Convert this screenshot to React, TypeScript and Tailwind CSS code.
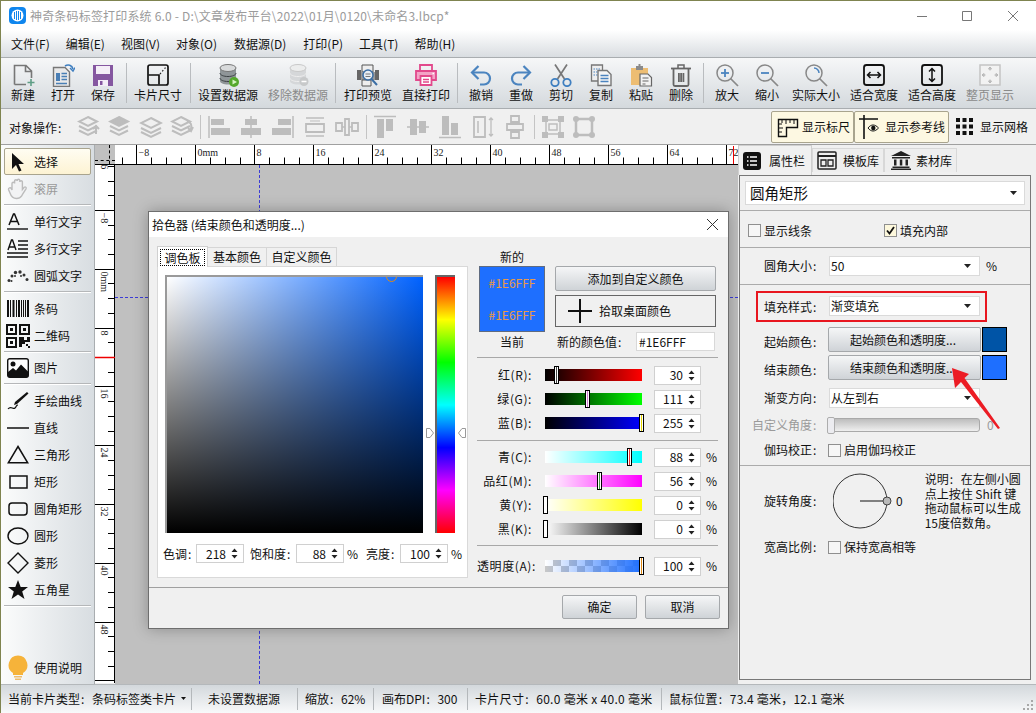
import React from "react";

type P = { s?: number };
const I = ({ s = 24, children, vb = "0 0 24 24" }: { s?: number; children: React.ReactNode; vb?: string }) => (
  <svg width={s} height={s} viewBox={vb} fill="none" className="block shrink-0">{children}</svg>
);
const C = () => <span className="inline-block w-[12px] pl-[1px] text-left">:</span>;

const NewI = () => (
  <I><path d="M3.5 21.5V2.5H15L20.5 8V15M3.5 21.5H15M14.5 2.5V8.5H20.5" stroke="#777" strokeWidth="1.6" /><path d="M20 16v7M16.5 19.5h7" stroke="#5f9e86" strokeWidth="1.6" /></I>
);
const OpenI = () => (
  <I><path d="M2.5 4.5H14L18.5 9V23.5H2.5Z" fill="#e9e9e9" stroke="#777" strokeWidth="1.4" /><path d="M5 10h4v8H5z" fill="#4a7fb5" /><path d="M10.5 10.5H16M10.5 13.5H16M10.5 16.5H16M5 20.5H16" stroke="#4a7fb5" strokeWidth="1.3" /><path d="M14 3c3-2 7-1 8 3" stroke="#3f7fc0" strokeWidth="1.6" /><path d="M19 5l3 3 2-3.500" stroke="#3f7fc0" strokeWidth="1.4" /></I>
);
const SaveI = () => (
  <I><path d="M2 2h20v21H2Z" fill="#8557a0" /><path d="M5 3h14v8H5z" fill="#f4eef7" /><path d="M7 17h10v6H7z" fill="#f4eef7" /><path d="M9 18h2.500v4H9z" fill="#8557a0" /></I>
);
const CardI = () => (
  <I><rect x="2" y="2" width="20" height="20" rx="2" stroke="#111" strokeWidth="1.7" /><path d="M2.500 12H13V21.500" stroke="#111" strokeWidth="1.7" /><path d="M14 11l6-7" stroke="#222" strokeWidth="1.200" strokeDasharray="1.500 2" /></I>
);
const Db = ({ on }: { on: boolean }) => (
  <I>
    <path d="M4 5v13c0 2 3.500 3.500 8 3.500s8-1.500 8-3.500V5" fill={on ? "#8f9598" : "#d5d7d9"} />
    <ellipse cx="12" cy="5" rx="8" ry="3.500" fill={on ? "#d8dadb" : "#eceded"} stroke={on ? "#777" : "#c9c9c9"} />
    <path d="M4 10c0 2 3.500 3.500 8 3.500s8-1.500 8-3.500M4 15c0 2 3.500 3.500 8 3.500s8-1.500 8-3.500" stroke={on ? "#3c4144" : "#eee"} strokeWidth="1" />
    {on ? (
      <g><circle cx="18" cy="19" r="5" fill="#55a82c" /><path d="M16.500 16.500L21 19l-4.500 2.500Z" fill="#d8f4c4" /></g>
    ) : (
      <g><circle cx="18" cy="18.500" r="4.500" fill="#c7c9ca" /><path d="M15.500 18.500h5" stroke="#fff" strokeWidth="1.500" /></g>
    )}
  </I>
);
const PreviewI = () => (
  <I>
    <path d="M6 2h11v7H6z" fill="#eee" stroke="#555" />
    <path d="M1 7h4v10H1zM19 7h4v10h-4z" fill="#666" />
    <path d="M5 9h14v8H5z" fill="#999" />
    <path d="M6 17h9v6H6z" fill="#eee" stroke="#555" />
    <circle cx="12" cy="12" r="5" fill="#e7eef5" stroke="#3a6ea5" strokeWidth="1.500" />
    <path d="M9.500 11h5M9.500 13.500h5" stroke="#777" />
    <path d="M15.500 16l5.500 6" stroke="#3a6ea5" strokeWidth="2" />
  </I>
);
const PrintI = () => (
  <I>
    <path d="M6 8V2h12v6" stroke="#e2498c" strokeWidth="1.800" />
    <path d="M6 17H2V8h20v9h-4" fill="#f3a3c6" stroke="#e2498c" strokeWidth="1.800" />
    <path d="M6.500 13h11v9h-11z" fill="#fff" stroke="#e2498c" strokeWidth="1.800" />
    <path d="M9 16.500h6M9 19h6" stroke="#e2498c" strokeWidth="1.300" />
    <path d="M18.500 10.500h1.500" stroke="#fff" strokeWidth="1.500" />
  </I>
);
const UndoI = ({ flip }: { flip?: boolean }) => (
  <I><g transform={flip ? "matrix(-1 0 0 1 24 0)" : undefined}><path d="M3 9.500h12a6 6 0 0 1 6 6 6 6 0 0 1-6 6h-4" stroke="#4b84bf" strokeWidth="2.200" /><path d="M9.500 3L3 9.500 9.500 16" stroke="#4b84bf" strokeWidth="2.200" /></g></I>
);
const CutI = () => (
  <I><path d="M6 1.500L15.500 16M18 1.500L8.500 16" stroke="#777" strokeWidth="1.700" /><circle cx="6" cy="19.500" r="3.700" stroke="#3f7fc0" strokeWidth="1.800" /><circle cx="18" cy="19.500" r="3.700" stroke="#3f7fc0" strokeWidth="1.800" /></I>
);
const CopyI = () => (
  <I><path d="M2.500 2h11v16h-11z" fill="#eee" stroke="#777" strokeWidth="1.300" /><path d="M4.500 6h7M4.500 9h7M4.500 12h7" stroke="#4b84bf" strokeDasharray="1.500 1" /><path d="M9 7.500h9l4 4v11H9z" fill="#f5f5f5" stroke="#777" strokeWidth="1.400" /><path d="M11.500 12.500h8M11.500 15.500h8M11.500 18.500h8" stroke="#4b84bf" strokeWidth="1.300" /></I>
);
const PasteI = () => (
  <I><path d="M2 5h17v17H2z" fill="#edbd72" /><path d="M7 3h7v4H7z" fill="#8a8a8a" /><path d="M9.500 1h2v2h-2z" fill="#8a8a8a" /><path d="M11 11h8l3.500 3.500V23H11z" fill="#f2f2f2" stroke="#666" strokeWidth="1.200" /><path d="M13.500 15h6M13.500 18h6M13.500 21h3" stroke="#666" /></I>
);
const TrashI = () => (
  <I><path d="M2 5.500h20" stroke="#666" strokeWidth="1.800" /><path d="M9 5V2h6v3" stroke="#666" strokeWidth="1.500" /><path d="M4.500 6v15.500a1.500 1.500 0 0 0 1.500 1.500h12a1.500 1.500 0 0 0 1.500-1.500V6" stroke="#666" strokeWidth="1.800" /><path d="M9 10h1.800v9H9zM11.200 10H13v9h-1.800zM13.500 10h1.800v9h-1.800z" fill="#666" /></I>
);
const Zoom = ({ kind }: { kind: "+" | "-" | "o" }) => (
  <I>
    <circle cx="10" cy="10" r="8" stroke="#888" strokeWidth="1.500" />
    <path d="M15.500 15.500L23 23" stroke="#888" strokeWidth="1.700" />
    {kind !== "o" && <path d="M6 10h8" stroke="#4b84bf" strokeWidth="1.800" />}
    {kind === "+" && <path d="M10 6v8" stroke="#4b84bf" strokeWidth="1.800" />}
    {kind === "o" && <path d="M10 5a5 5 0 0 1 5 5" stroke="#4b84bf" strokeWidth="1.500" />}
  </I>
);
const FitI = ({ v }: { v?: boolean }) => (
  <I>
    <rect x="2" y="2" width="20" height="20" rx="2.500" stroke="#111" strokeWidth="1.800" />
    <g transform={v ? "rotate(90 12 12)" : undefined}><path d="M5.500 12h13M8.500 9l-3 3 3 3M15.500 9l3 3-3 3" stroke="#111" strokeWidth="1.500" /></g>
  </I>
);
const PageI = () => (
  <I><rect x="2" y="2" width="20" height="20" fill="#f2f2f2" stroke="#c4c4c4" strokeWidth="1.500" /><path d="M12 4.500v3M12 16.500v3M4.500 12h3M16.500 12h3M12 4l-1.500 2h3ZM12 20l-1.500-2h3ZM4 12l2-1.500v3ZM20 12l-2-1.500v3Z" stroke="#b4b4b4" /></I>
);

const g = "#bdbdbd";
const Obj = ({ n }: { n: number }) => {
  const layers = (
    <g>
      <path d="M11 2l9 4.500-9 4.500-9-4.500Z" fill={n === 1 ? g : "none"} stroke={g} strokeWidth="2" />
      <path d="M2 11l9 4.500 9-4.500M2 15.500l9 4.500 9-4.500" stroke={g} strokeWidth="2" />
    </g>
  );
  const line = (d: string) => <path d={d} fill={g} />;
  switch (n) {
    case 0: return <I>{layers}<path d="M19 19v-8M16 14l3-3 3 3" stroke={g} strokeWidth="2" /></I>;
    case 1: return <I>{layers}</I>;
    case 2: return <I><path d="M12 3l10 5-10 5L2 8Z" stroke={g} strokeWidth="2" /><path d="M2 13l10 5 10-5M2 17l10 5 10-5" stroke={g} strokeWidth="2" /></I>;
    case 3: return <I>{layers}<path d="M17 6c4 1 5 4 4 8M18 13l3 3 2-4" stroke={g} strokeWidth="2" /></I>;
    case 4: return <I><path d="M2 1v22" stroke={g} strokeWidth="1.500" />{line("M4 4h13v6H4zM4 13h19v7H4z")}</I>;
    case 5: return <I><path d="M12 1v22" stroke={g} strokeWidth="1.500" />{line("M6 4h12v6H6zM2 13h20v7H2z")}</I>;
    case 6: return <I><path d="M22 1v22" stroke={g} strokeWidth="1.500" />{line("M7 4h13v6H7zM1 13h19v7H1z")}</I>;
    case 7: return <I><path d="M3 3h18M3 21h18" stroke={g} strokeWidth="1.500" /><path d="M3 9h18v8H3z" stroke={g} strokeWidth="1.800" /><path d="M7 6h10" stroke={g} /></I>;
    case 8: return <I><path d="M1 8h6v8H1zM17 8h6v8h-6zM10 4h4v16h-4z" stroke={g} strokeWidth="1.800" /><path d="M7 12h3M14 12h3" stroke={g} strokeWidth="1.500" /></I>;
    case 9: return <I><path d="M1 1.500h22" stroke={g} strokeWidth="1.500" />{line("M4 4h7v19H4zM13 4h7v12h-7z")}</I>;
    case 10: return <I><path d="M1 12h22" stroke={g} strokeWidth="1.500" />{line("M4 4h7v16H4zM13 6h7v12h-7z")}</I>;
    case 11: return <I><path d="M1 22.500h22" stroke={g} strokeWidth="1.500" />{line("M4 1h7v19H4zM13 8h7v12h-7z")}</I>;
    case 12: return <I><path d="M3 2h11v20H3z" stroke={g} strokeWidth="1.800" /><path d="M7 6v12" stroke={g} strokeWidth="1.500" /><path d="M20 3v18M18 5l2-2 2 2M18 19l2 2 2-2" stroke={g} strokeWidth="1.300" /></I>;
    case 13: return <I><path d="M8 1h8v6H8zM8 17h8v6H8z" stroke={g} strokeWidth="1.800" /><path d="M4 9h16v6H4z" stroke={g} strokeWidth="1.800" /><path d="M12 7v2M12 15v2" stroke={g} /></I>;
    case 14: return <I><path d="M5 5h14v14H5z" stroke={g} strokeWidth="1.500" /><path d="M8 9h8v6H8z" stroke={g} strokeWidth="1.500" /><path d="M1 1h6v6H1zM17 1h6v6h-6zM1 17h6v6H1zM17 17h6v6h-6z" fill={g} /></I>;
    default: return <I><path d="M6 4h12M6 20h12M4 6v12M20 6v12" stroke={g} strokeWidth="2.500" /><circle cx="4" cy="4" r="3" fill={g} /><circle cx="20" cy="4" r="3" fill={g} /><circle cx="4" cy="20" r="3" fill={g} /><circle cx="20" cy="20" r="3" fill={g} /></I>;
  }
};

const Tool = ({ w, label, off, children }: { w: number; label: string; off?: boolean; children: React.ReactNode }) => (
  <div style={{ width: w }} className="flex flex-col items-center shrink-0">
    <div className="h-[27px] pt-[5px]">{children}</div>
    <span className={`mt-[2px] leading-[16px] whitespace-nowrap ${off ? "text-[#8a8a8a]" : "text-[#111]"}`}>{label}</span>
  </div>
);
const TSep = ({ w }: { w: number }) => (
  <div style={{ width: w }} className="flex justify-center shrink-0 pt-[5px] pb-[5px]"><div className="w-[1px] h-full bg-[#b9bcbf]" /></div>
);

const LRow = ({ label, off, on, icon }: { label: string; off?: boolean; on?: boolean; icon: React.ReactNode }) => (
  <div className={`h-[27px] flex items-center ${on ? "mx-[3px] pl-[1px] border border-[#a9a48e] rounded-[2px] bg-[linear-gradient(#fffdf2,#fdf3d3)]" : "pl-[5px]"}`}>
    <div className="w-[24px] flex justify-center shrink-0">{icon}</div>
    <span className={`ml-[4px] whitespace-nowrap ${off ? "text-[#9a9a9a]" : "text-[#111]"}`}>{label}</span>
  </div>
);
const LSep = ({ h = 6 }: { h?: number }) => (
  <div style={{ height: h }} className="flex flex-col justify-center mx-[3px]"><div className="h-[1px] bg-[#b5b7b9]" /><div className="h-[1px] bg-[#fff]" /></div>
);

const Spin = ({ v, w = 47 }: { v: string; w?: number }) => (
  <div style={{ width: w }} className="h-[19px] bg-white border border-[#d0d0d0] flex items-center justify-end shrink-0">
    <span className="leading-none text-[#111]">{v}</span>
    <svg width="7" height="13" viewBox="0 0 7 13" className="ml-[5px] mr-[5px] block"><path d="M3.500 1.500L6.500 5H.5ZM3.500 11.500L.5 8h6Z" fill="#222" /></svg>
  </div>
);
const Caret = () => <svg width="7" height="4" viewBox="0 0 7 4" className="block shrink-0"><path d="M0 0h7L3.500 4Z" fill="#222" /></svg>;

const Slider = ({ label, value, pos, bar, mid, pct }: { label: string; value: string; pos: number; bar: string; mid: string; pct?: boolean }) => (
  <div className="h-[24px] flex items-center">
    <div className="w-[55px] text-right whitespace-nowrap leading-none text-[#111] tracking-[0.6px]">{label}</div>
    <div className={`relative w-[97px] h-[12px] ml-[13px] shrink-0 ${bar}`}>
      <div style={{ left: pos, background: `linear-gradient(to right,#fff 34%,${mid} 34%,${mid} 66%,#fff 66%)` }} className="absolute top-[-3px] w-[5px] h-[18px] border border-black" />
    </div>
    <div className="ml-[12px]"><Spin v={value} /></div>
    {pct && <span className="ml-[5px] leading-none text-[#111]">%</span>}
  </div>
);
const DSep = () => <div className="h-[1px] bg-[#a8a8a8] shrink-0" />;

const Cb = ({ on }: { on?: boolean }) => (
  <div className={`w-[13px] h-[13px] border border-[#8f8f8f] shrink-0 ${on ? "bg-[#fdf8dc]" : "bg-[#f6f6f6]"}`}>
    {on && <svg width="11" height="11" viewBox="0 0 11 11" className="block"><path d="M2 5.500l2.500 3L9 2" stroke="#111" strokeWidth="1.800" fill="none" /></svg>}
  </div>
);
const Sel = ({ v, w = 151 }: { v: string; w?: number }) => (
  <div style={{ width: w }} className="h-[20px] bg-white border border-[#dadada] flex items-center pl-[1px] pr-[8px] justify-between shrink-0">
    <span className="leading-none text-[#111]">{v}</span><Caret />
  </div>
);
const Lab = ({ t, off, cls = "" }: { t: string; off?: boolean; cls?: string }) => (
  <div className={`w-[84px] text-right shrink-0 whitespace-nowrap leading-none ${off ? "text-[#9a9a9a]" : "text-[#111]"} ${cls}`}>{t}<C /></div>
);
const GBtn = ({ t, cls }: { t: string; cls: string }) => (
  <div className={`flex items-center justify-center border border-[#a5a8ab] rounded-[2px] bg-[linear-gradient(#f5f6f7,#cfd3d7)] whitespace-nowrap text-[#111] leading-none ${cls}`}>{t}</div>
);
const STab = ({ label, icon, on, cls }: { label: string; icon: React.ReactNode; on?: boolean; cls: string }) => (
  <div className={`flex items-center border-t border-x shrink-0 ${cls} ${on ? "h-[30px] bg-[#f0f0f0] border-[#cfcfcf]" : "h-[24px] mt-[3px] bg-[#eeeeee] border-[#d8d8d8]"}`}>
    {icon}<span className="text-[12px] leading-none text-[#111]">{label}</span>
  </div>
);

const majorsH = Array.from({ length: 11 }, (_, k) => k);
const RulerH = () => (
  <svg width="623" height="20" className="block shrink-0 bg-white">
    {Array.from({ length: 44 }, (_, i) => {
      const x = Math.round(21.3 + (i - 1) * 14.75) + 0.5;
      return (i - 1) % 4 === 0 ? null : <line key={i} x1={x} x2={x} y1="12.500" y2="20" stroke="#000" />;
    })}
    {majorsH.map((k) => {
      const x = Math.round(21.3 + 59 * k) + 0.5;
      return (
        <g key={k}>
          <line x1={x} x2={x} y1="0" y2="20" stroke="#000" />
          <text x={x + 2} y="11" fontSize="10" fontFamily="'Liberation Serif', serif" fill="#222">{k === 0 ? "−8" : k === 1 ? "0mm" : String((k - 1) * 8)}</text>
        </g>
      );
    })}
    <line x1="0" x2="623" y1="19.500" y2="19.500" stroke="#000" />
    <line x1="618.500" x2="618.500" y1="1" y2="19" stroke="#e00" />
  </svg>
);
const RulerV = () => (
  <svg width="20" height="518" className="block shrink-0 bg-white">
    {Array.from({ length: 40 }, (_, i) => {
      const y = -13.8 + i * 14.7;
      return i % 4 === 0 ? null : <line key={i} x1="13" x2="20" y1={Math.round(y) + 0.5} y2={Math.round(y) + 0.5} stroke="#000" />;
    })}
    {Array.from({ length: 10 }, (_, k) => {
      const y = Math.round(-13.8 + 58.8 * k) + 0.5;
      const lab = k === 0 ? "−16" : k === 1 ? "−8" : k === 2 ? "0mm" : String((k - 2) * 8);
      return (
        <g key={k}>
          <line x1="0" x2="20" y1={y} y2={y} stroke="#000" />
          <text x="5.500" y={y + 2} fontSize="10" fontFamily="'Liberation Serif', serif" fill="#222" transform={`rotate(90 5.500 ${y + 2})`}>{lab}</text>
        </g>
      );
    })}
    <line x1="19.500" x2="19.500" y1="0" y2="518" stroke="#000" />
    <line x1="0" x2="20" y1="192.500" y2="192.500" stroke="#e00" strokeWidth="1.500" />
  </svg>
);

export default function App() {
  return (
    <div className="relative w-[1036px] h-[713px] overflow-hidden flex flex-col bg-[#f0f0f0] border-t border-l border-[#7f8450] text-[12px] text-[#111] font-['Noto_Sans_CJK_SC',sans-serif]">
      <div className="h-[56px] shrink-0 flex flex-col bg-[linear-gradient(#fff_52%,#d9dde1)]">
        <div className="h-[29px] flex items-center pl-[8px]">
          <svg width="17" height="17" viewBox="0 0 17 17" className="block"><rect width="17" height="17" rx="4" fill="#0f86ee" /><circle cx="8.500" cy="8.500" r="6" fill="#fff" /><path d="M5.500 5v7M7.500 4v9M9.500 4v9M11.500 5v7" stroke="#0f86ee" /></svg>
          <span className="ml-[4px] text-[#9b9b9b] whitespace-nowrap leading-none tracking-[0.18px]">神奇条码标签打印系统 6.0 - D:\文章发布平台\2022\01月\0120\未命名3.lbcp*</span>
          <div className="ml-auto flex items-center pr-[17px]">
            <svg width="12" height="12" viewBox="0 0 12 12" className="block"><path d="M1 6.500h10" stroke="#777" /></svg>
            <svg width="12" height="12" viewBox="0 0 12 12" className="block ml-[33px]"><path d="M1.500 1.500h9v9h-9z" stroke="#777" fill="none" /></svg>
            <svg width="12" height="12" viewBox="0 0 12 12" className="block ml-[34px]"><path d="M1 1l10 10M11 1L1 11" stroke="#777" /></svg>
          </div>
        </div>
        <div className="h-[27px] flex items-center pl-[10px] text-[#111] leading-none whitespace-nowrap">
          <span>文件(F)</span><span className="ml-[16px]">编辑(E)</span><span className="ml-[16px]">视图(V)</span><span className="ml-[16px]">对象(O)</span><span className="ml-[17px]">数据源(D)</span><span className="ml-[17px]">打印(P)</span><span className="ml-[16px]">工具(T)</span><span className="ml-[16px]">帮助(H)</span>
        </div>
      </div>

      <div className="h-[52px] shrink-0 flex pl-[2px] border-y border-[#a9adb0] bg-[linear-gradient(#f6f7f8,#d4d9dd)]">
        <Tool w={40} label="新建"><NewI /></Tool>
        <Tool w={40} label="打开"><OpenI /></Tool>
        <Tool w={40} label="保存"><SaveI /></Tool>
        <TSep w={6} />
        <Tool w={58} label="卡片尺寸"><CardI /></Tool>
        <TSep w={6} />
        <Tool w={70} label="设置数据源"><Db on /></Tool>
        <Tool w={70} label="移除数据源" off><Db on={false} /></Tool>
        <TSep w={4} />
        <Tool w={62} label="打印预览"><PreviewI /></Tool>
        <Tool w={54} label="直接打印"><PrintI /></Tool>
        <TSep w={8} />
        <Tool w={40} label="撤销"><UndoI /></Tool>
        <Tool w={40} label="重做"><UndoI flip /></Tool>
        <Tool w={40} label="剪切"><CutI /></Tool>
        <Tool w={40} label="复制"><CopyI /></Tool>
        <Tool w={40} label="粘贴"><PasteI /></Tool>
        <Tool w={40} label="删除"><TrashI /></Tool>
        <TSep w={4} />
        <Tool w={44} label="放大"><Zoom kind="+" /></Tool>
        <Tool w={36} label="缩小"><Zoom kind="-" /></Tool>
        <Tool w={62} label="实际大小"><Zoom kind="o" /></Tool>
        <Tool w={54} label="适合宽度"><FitI /></Tool>
        <Tool w={62} label="适合高度"><FitI v /></Tool>
        <Tool w={54} label="整页显示" off><PageI /></Tool>
      </div>

      <div className="h-[36px] shrink-0 flex items-center bg-[#f0f0f0] border-b border-[#a0a0a0]">
        <span className="ml-[8px] mt-[3px] w-[64px] whitespace-nowrap leading-none shrink-0">对象操作<C /></span>
        {[0, 1, 2, 3].map((n) => <div key={n} className="w-[31px] mt-[1px] flex justify-center shrink-0"><Obj n={n} /></div>)}
        <div className="w-[6px] h-[24px] flex justify-center shrink-0"><div className="w-[1px] bg-[#c4c4c4]" /></div>
        {[4, 5, 6, 7, 8].map((n) => <div key={n} className="w-[32px] mt-[1px] flex justify-center shrink-0"><Obj n={n} /></div>)}
        <div className="w-[6px] h-[24px] flex justify-center shrink-0"><div className="w-[1px] bg-[#c4c4c4]" /></div>
        {[9, 10, 11, 12, 13].map((n) => <div key={n} className="w-[32.5px] mt-[1px] flex justify-center shrink-0"><Obj n={n} /></div>)}
        <div className="w-[6px] h-[24px] flex justify-center shrink-0"><div className="w-[1px] bg-[#c4c4c4]" /></div>
        {[14, 15].map((n) => <div key={n} className="w-[31px] mt-[1px] flex justify-center shrink-0"><Obj n={n} /></div>)}
        <div className="ml-auto flex items-center">
          <div className="w-[83px] h-[32px] flex items-center pl-[5px] gap-[3px] border border-[#a9a48e] rounded-[2px] bg-[#fdf8e2] whitespace-nowrap leading-none">
            <svg width="22" height="22" viewBox="0 0 22 22" className="block shrink-0"><path d="M1.500 3.500h19v8h-11v9h-8Z" stroke="#111" strokeWidth="1.400" fill="none" /><path d="M5 4v3M9 4v4M13 4v3M17 4v4M2 8h3M2 12h4M2 16h3" stroke="#111" /></svg>
            显示标尺
          </div>
          <div className="w-[95px] h-[32px] flex items-center pl-[4px] gap-[2px] border border-[#a9a48e] rounded-[2px] bg-[#fdf8e2] whitespace-nowrap leading-none">
            <svg width="24" height="24" viewBox="0 0 24 24" className="block shrink-0"><path d="M0 4h19M5 0v24" stroke="#111" strokeWidth="1.600" /><path d="M9 13c3-4 7-4 10.500 0-3.500 4-7.500 4-10.500 0Z" stroke="#111" fill="none" /><circle cx="14.300" cy="13" r="2.200" fill="#111" /></svg>
            显示参考线
          </div>
          <div className="w-[87px] flex items-center pl-[6px] gap-[6px] whitespace-nowrap leading-none">
            <svg width="19" height="19" viewBox="0 0 19 19" className="block shrink-0" fill="#111"><path d="M1 1h4v4H1zM7.500 1h4v4h-4zM14 1h4v4h-4zM1 7.500h4v4H1zM7.500 7.500h4v4h-4zM14 7.500h4v4h-4zM1 14h4v4H1zM7.500 14h4v4h-4zM14 14h4v4h-4z" /></svg>
            显示网格
          </div>
        </div>
      </div>

      <div className="flex-1 flex min-h-0">
        <div className="w-[94px] shrink-0 flex flex-col pt-[3px] pb-[3px] bg-[linear-gradient(to_right,#fbfcfc,#d8dde1)] border-r border-[#a9adb0]">
          <LRow on label="选择" icon={<svg width="16" height="20" viewBox="0 0 16 20" className="block"><path d="M2 1l12 11H8.500l3 6.500-2.500 1-3-6.500L2 17Z" fill="#111" /></svg>} />
          <LRow off label="滚屏" icon={<svg width="22" height="22" viewBox="0 0 22 22" className="block"><path d="M5 12V5.500a1.300 1.300 0 0 1 2.600 0V3a1.300 1.300 0 0 1 2.600 0v-.5a1.300 1.300 0 0 1 2.600 0V4a1.300 1.300 0 0 1 2.600 0v7.500l1.800-2.200c1.200-1 2.500.2 1.800 1.500-2 3-3 5-4.300 7-1 1.500-2.500 2.700-5.200 2.700C6 20.500 4 18 3 15L1.500 11.500C1.200 10 3.500 9 4.200 10.500Z" fill="#f2f3f4" stroke="#bcbcbc" strokeWidth="1.400" /></svg>} />
          <LSep />
          <LRow label="单行文字" icon={<svg width="22" height="20" viewBox="0 0 22 20" className="block"><path d="M2 13L6.500 2h1L12 13M3.800 9.500h7" stroke="#111" strokeWidth="1.500" fill="none" /><path d="M0 17h21" stroke="#111" strokeWidth="1.400" /></svg>} />
          <LRow label="多行文字" icon={<svg width="22" height="20" viewBox="0 0 22 20" className="block"><path d="M1 11L4.500 1h1L9 11M2.300 8h5.400" stroke="#111" strokeWidth="1.400" fill="none" /><path d="M11 2h10M11 6h10M11 10h10M0 14h21M0 18h21" stroke="#111" strokeWidth="1.400" /></svg>} />
          <LRow label="圆弧文字" icon={<svg width="22" height="14" viewBox="0 0 22 14" fill="#333" className="block"><circle cx="2" cy="11.500" r="1.500" /><circle cx="5" cy="7" r="1.500" /><circle cx="8.500" cy="3.500" r="1.700" /><circle cx="13" cy="3" r="1.700" /><circle cx="17" cy="6" r="1.500" /><circle cx="20" cy="10.500" r="1.500" /><circle cx="4.500" cy="12" r="1" /><circle cx="8" cy="7" r="1" /><circle cx="14" cy="7" r="1" /></svg>} />
          <LSep />
          <LRow label="条码" icon={<svg width="22" height="17" viewBox="0 0 22 17" fill="#111" className="block"><path d="M0 0h2v17H0zM3 0h1v17H3zM5.500 0h2v17h-2zM9 0h1v17H9zM11 0h2v17h-2zM14 0h1v17h-1zM16 0h1v17h-1zM18 0h1v17h-1zM20 0h2v17h-2z" /></svg>} />
          <LRow label="二维码" icon={<svg width="24" height="24" viewBox="0 0 24 24" className="block"><path d="M1 1h9v9H1zM14 1h9v9h-9zM1 14h9v9H1z" stroke="#111" strokeWidth="2" fill="none" /><path d="M4 4h3v3H4zM17 4h3v3h-3zM4 17h3v3H4zM13 13h5v3h3v-3h3v5h-5v2h-3v3h-3zM20 20h2v2h-2zM22 22h2v2h-2z" fill="#111" /></svg>} />
          <LSep h={5} />
          <LRow label="图片" icon={<svg width="22" height="20" viewBox="0 0 22 20" className="block"><rect x="0.700" y="0.700" width="20.600" height="18.600" rx="2" fill="#fff" stroke="#111" strokeWidth="1.400" /><circle cx="6" cy="6" r="2.500" fill="#111" /><path d="M1 14l5-4 3 2.500 5-6 7 7V19H1Z" fill="#111" /></svg>} />
          <LSep />
          <LRow label="手绘曲线" icon={<svg width="22" height="20" viewBox="0 0 22 20" className="block"><path d="M20 1l1.500 1.500L10 13l-3 1 1-3Z" fill="#111" /><path d="M1 18c3-4 5 1 7-1s1-3 3-3" stroke="#111" strokeWidth="1.200" fill="none" /></svg>} />
          <LRow label="直线" icon={<svg width="22" height="4" viewBox="0 0 22 4" className="block"><path d="M0 2h22" stroke="#111" strokeWidth="1.500" /></svg>} />
          <LRow label="三角形" icon={<svg width="22" height="19" viewBox="0 0 22 19" className="block"><path d="M11 1.500L20.700 17.800H1.300Z" stroke="#111" strokeWidth="1.500" fill="none" /></svg>} />
          <LRow label="矩形" icon={<svg width="19" height="14" viewBox="0 0 19 14" className="block"><path d="M1 1h17v12H1z" stroke="#111" strokeWidth="1.500" fill="none" /></svg>} />
          <LRow label="圆角矩形" icon={<svg width="20" height="14" viewBox="0 0 20 14" className="block"><rect x="1" y="1" width="18" height="12" rx="3" stroke="#111" strokeWidth="1.500" fill="none" /></svg>} />
          <LRow label="圆形" icon={<svg width="22" height="18" viewBox="0 0 22 18" className="block"><ellipse cx="11" cy="9" rx="10" ry="8" stroke="#111" strokeWidth="1.400" fill="none" /></svg>} />
          <LRow label="菱形" icon={<svg width="22" height="22" viewBox="0 0 22 22" className="block"><path d="M11 1l10 10-10 10L1 11Z" stroke="#111" strokeWidth="1.400" fill="none" /></svg>} />
          <LRow label="五角星" icon={<svg width="20" height="20" viewBox="0 0 20 20" className="block"><path d="M10 0l2.700 7h7.300l-5.800 4.500L16.500 19 10 14.500 3.500 19l2.300-7.500L0 7h7.300Z" fill="#111" /></svg>} />
          <LSep />
          <div className="mt-auto"><LRow label="使用说明" icon={<svg width="20" height="26" viewBox="0 0 20 26" className="block"><path d="M10 0.500a9.500 9.500 0 0 1 5 17.500v2H5v-2A9.500 9.500 0 0 1 10 .5Z" fill="#f6b33a" /><path d="M6 21h8v1.500H6zM7 23.500h6V25H7z" fill="#eebc6a" /></svg>} /></div>
        </div>

        <div className="w-[20px] shrink-0 flex flex-col">
          <div className="h-[20px] relative bg-[#c0c0c0] border-b border-black shrink-0">
            <div className="absolute left-[14px] top-0 bottom-0 border-l border-dashed border-black" />
            <div className="absolute left-0 right-0 top-[15px] border-t border-dashed border-black" />
          </div>
          <RulerV />
        </div>

        <div className="w-[623px] shrink-0 flex flex-col relative">
          <RulerH />
          <div className="flex-1 relative bg-[#c0c0c0]">
            <div className="absolute left-[144px] top-0 bottom-0 border-l border-dashed border-[#3b3bd6]" />
            <div className="absolute left-0 right-0 top-[132px] border-t border-dashed border-[#3b3bd6]" />
            <div className="absolute left-[33px] top-[46px] w-[581px] h-[418px] flex flex-col bg-[#f0f0f0] border border-[#6e6e6e] shadow-[0_0_14px_rgba(0,0,0,0.28)]">
              <div className="h-[25px] shrink-0 bg-white flex items-center pl-[3px] pr-[9px] justify-between">
                <span className="leading-none whitespace-nowrap">拾色器 (结束颜色和透明度...)</span>
                <svg width="13" height="13" viewBox="0 0 13 13" className="block"><path d="M1 1l11 11M12 1L1 12" stroke="#333" /></svg>
              </div>
              <div className="flex-1 flex pl-[8px] min-h-0">
                <div className="w-[311px] shrink-0 flex flex-col pt-[8px]">
                  <div className="flex h-[21px] items-end">
                    <div className="w-[51px] h-[21px] bg-white border-t border-x border-[#d0d0d0] flex items-center justify-center relative z-10 -mb-[1px]">
                      <span className="border border-dotted border-black px-[3px] leading-[15px] whitespace-nowrap">调色板</span>
                    </div>
                    <div className="w-[59px] h-[19px] border-t border-r border-[#d6d6d6] flex items-center justify-center leading-none">基本颜色</div>
                    <div className="w-[70px] h-[19px] border-t border-r border-[#d6d6d6] flex items-center justify-center leading-none">自定义颜色</div>
                  </div>
                  <div className="h-[312px] bg-white border border-[#d9d9d9] flex flex-col pl-[7px] pt-[8px]">
                    <div className="flex">
                      <div className="relative w-[258px] h-[258px] border-t-2 border-l-2 border-[#9a9a9a] bg-[linear-gradient(to_top,#000,transparent),linear-gradient(to_right,#fff,#0062ff)] overflow-hidden">
                        <div className="absolute left-[219px] top-[-6px] w-[11px] h-[11px] rounded-full border border-[#e08a14]" />
                      </div>
                      <div className="relative w-[20px] h-[258px] ml-[12px] border-t-2 border-l-2 border-[#666] bg-[linear-gradient(#f00,#ff0,#0f0,#0ff,#00f,#f0f,#f00)]">
                        <svg width="8" height="10" viewBox="0 0 8 10" className="absolute left-[-11px] top-[151px] block"><path d="M.5.5H4L7.500 5 4 9.500H.5Z" stroke="#999" fill="#fff" /></svg>
                        <svg width="8" height="10" viewBox="0 0 8 10" className="absolute right-[-11px] top-[151px] block"><path d="M7.500.5H4L.5 5 4 9.500h3.500Z" stroke="#999" fill="#fff" /></svg>
                      </div>
                    </div>
                    <div className="flex items-center mt-[11px] ml-[-2px] whitespace-nowrap leading-none">
                      <span className="w-[33px]">色调<C /></span><Spin v="218" w={48} />
                      <span className="ml-[6px] w-[46px]">饱和度<C /></span><Spin v="88" w={48} />
                      <span className="ml-[3px] w-[19px]">%</span>
                      <span className="w-[34px]">亮度<C /></span><Spin v="100" w={48} />
                      <span className="ml-[3px]">%</span>
                    </div>
                  </div>
                </div>

                <div className="w-[241px] ml-[9px] shrink-0 flex flex-col pt-[11px]">
                  <div className="flex">
                    <div className="w-[66px] ml-[2px] flex flex-col items-center">
                      <span className="h-[18px] leading-[18px]">新的</span>
                      <div className="w-[66px] h-[66px] bg-[#1e6fff] border border-[#5f6b80] flex flex-col items-center justify-between py-[10px] text-[#eb9a45] leading-none">
                        <span>#1E6FFF</span><span>#1E6FFF</span>
                      </div>
                      <span className="h-[20px] leading-[20px]">当前</span>
                    </div>
                    <div className="w-[161px] ml-[10px] flex flex-col pt-[18px]">
                      <GBtn t="添加到自定义颜色" cls="h-[25px]" />
                      <div className="h-[32px] mt-[4px] border border-[#666] flex items-center pl-[12px] gap-[7px] leading-none">
                        <svg width="24" height="24" viewBox="0 0 24 24" className="block"><path d="M0 12h24M12 0v24" stroke="#111" strokeWidth="2" /></svg>
                        拾取桌面颜色
                      </div>
                      <div className="flex items-center h-[19px] mt-[5px] pl-[2px] leading-none whitespace-nowrap">
                        新的颜色值<C />
                        <div className="ml-auto mr-[1px] w-[79px] h-[19px] bg-white border border-[#d8d8d8] pl-[2px] flex items-center">#1E6FFF</div>
                      </div>
                    </div>
                  </div>
                  <div className="mt-[5px]"><DSep /></div>
                  <div className="mt-[5px]">
                    <Slider label="红(R):" value="30" pos={9} mid="#444" bar="bg-[linear-gradient(to_right,#000,#f00)]" />
                    <Slider label="绿(G):" value="111" pos={40} mid="#d77bd7" bar="bg-[linear-gradient(to_right,#000,#0f0)]" />
                    <Slider label="蓝(B):" value="255" pos={94} mid="#e6d800" bar="bg-[linear-gradient(to_right,#000,#00f)]" />
                  </div>
                  <div className="mt-[5px]"><DSep /></div>
                  <div className="mt-[4px]">
                    <Slider label="青(C):" value="88" pct pos={82} mid="#e33" bar="bg-[linear-gradient(to_right,#fff,#0ff)]" />
                    <Slider label="品红(M):" value="56" pct pos={52} mid="#3d9a3d" bar="bg-[linear-gradient(to_right,#fff,#f0f)]" />
                    <Slider label="黄(Y):" value="0" pct pos={-2} mid="#fff" bar="bg-[linear-gradient(to_right,#fff,#ff0)]" />
                    <Slider label="黑(K):" value="0" pct pos={-2} mid="#fff" bar="bg-[linear-gradient(to_right,#fff,#000)]" />
                  </div>
                  <div className="mt-[4px]"><DSep /></div>
                  <div className="mt-[8px]">
                    <Slider label="透明度(A):" value="100" pct pos={94} mid="#e08a14" bar="bg-[linear-gradient(to_right,rgba(30,111,255,0),#1e6fff),repeating-conic-gradient(#c8c8c8_0_25%,#fff_0_50%)] bg-size-[100%_100%,16px_12px]" />
                  </div>
                </div>
              </div>
              <div className="h-[41px] shrink-0 border-t border-[#a0a0a0] flex justify-end items-start pt-[7px] pr-[8px] gap-[8px]">
                <GBtn t="确定" cls="w-[75px] h-[24px]" />
                <GBtn t="取消" cls="w-[75px] h-[24px]" />
              </div>
            </div>
          </div>
        </div>

        <div className="flex-1 min-w-0 flex flex-col pl-[1px] pr-[5px] relative">
          <div className="h-[30px] shrink-0 flex items-start ml-[-1px] relative z-10">
            <STab on cls="w-[74px] pl-[4px] gap-[8px]" label="属性栏" icon={<svg width="18" height="18" viewBox="0 0 18 18" className="block"><rect width="18" height="18" rx="3" fill="#111" /><path d="M4 5h1.500M7 5h7M4 9h1.500M7 9h7M4 13h1.500M7 13h7" stroke="#fff" strokeWidth="1.500" /></svg>} />
            <STab cls="w-[72px] pl-[4px] gap-[6px]" label="模板库" icon={<svg width="20" height="19" viewBox="0 0 20 19" className="block"><rect x="1" y="1" width="18" height="17" rx="1" stroke="#222" strokeWidth="1.500" fill="none" /><path d="M1 5h18" stroke="#222" strokeWidth="2" /><path d="M4 9h5v6H4zM11 9h5v6h-5z" stroke="#222" strokeWidth="1.300" fill="none" /></svg>} />
            <STab cls="w-[73px] pl-[6px] gap-[5px]" label="素材库" icon={<svg width="20" height="19" viewBox="0 0 20 19" className="block" fill="#222"><path d="M10 0l10 5H0ZM1 6h18v1.500H1zM3 8.500h2.500v6H3zM8.800 8.500h2.500v6H8.800zM14.500 8.500H17v6h-2.500zM1.500 15.500h17V17h-17zM0 17.500h20V19H0z" /></svg>} />
          </div>
          <div className="h-[505px] shrink-0 border border-[#777] bg-[#f0f0f0] flex flex-col">
            <div className="h-[35px] shrink-0 flex items-center px-[5px] border-b border-[#ababab]">
              <div className="w-[280px] h-[24px] bg-white border border-[#dadada] flex items-center justify-between pl-[4px] pr-[7px]">
                <span className="text-[14.500px] leading-none">圆角矩形</span><Caret />
              </div>
            </div>
            <div className="h-[37px] shrink-0 flex items-center pl-[8px] pt-[3px] border-b border-[#ababab] leading-none">
              <Cb /><span className="ml-[3px] w-[120px]">显示线条</span><Cb on /><span className="ml-[3px]">填充内部</span>
            </div>
            <div className="h-[37px] shrink-0 flex items-center border-b border-[#ababab]">
              <Lab t="圆角大小" />
              <div className="ml-[5px]"><Sel v="50" /></div>
              <span className="ml-[6px] leading-none">%</span>
            </div>
            <div className="h-[181px] shrink-0 flex flex-col border-b border-[#ababab]">
              <div className="h-[20px] mt-[11px] flex items-center"><Lab t="填充样式" cls="mt-[1px]" /><div className="ml-[5px]"><Sel v="渐变填充" /></div></div>
              <div className="h-[25px] mt-[11px] flex items-center"><Lab t="起始颜色" cls="mt-[4px]" /><GBtn t="起始颜色和透明度..." cls="ml-[4px] w-[153px] h-[25px] pr-[3px]" /><div className="ml-[1px] w-[25px] h-[25px] bg-[#0054a6] border border-black" /></div>
              <div className="h-[25px] mt-[3px] flex items-center"><Lab t="结束颜色" cls="mt-[4px]" /><GBtn t="结束颜色和透明度..." cls="ml-[4px] w-[153px] h-[25px] pr-[3px]" /><div className="ml-[1px] w-[25px] h-[25px] bg-[#1e6fff] border border-black" /></div>
              <div className="h-[20px] mt-[8px] flex items-center"><Lab t="渐变方向" /><div className="ml-[5px]"><Sel v="从左到右" /></div></div>
              <div className="h-[16px] mt-[9px] flex items-center">
                <Lab off t="自定义角度" />
                <div className="relative ml-[3px] w-[153px] h-[14px] rounded-[3px] border border-[#a9a9a9] bg-[linear-gradient(#bdbdbd,#efefef)]">
                  <div className="absolute left-[-1px] top-[-2px] w-[8px] h-[17px] rounded-[2px] border border-[#adadad] bg-[#ececf0]" />
                </div>
                <span className="ml-[7px] text-[#9a9a9a] leading-none">0</span>
              </div>
              <div className="h-[14px] mt-[10px] flex items-center leading-none"><Lab t="伽玛校正" /><div className="ml-[4px]"><Cb /></div><span className="ml-[3px]">启用伽玛校正</span></div>
            </div>
            <div className="flex mt-[6px] h-[58px] items-center">
              <Lab t="旋转角度" />
              <svg width="66" height="58" viewBox="0 0 66 58" className="block ml-[9px] shrink-0"><circle cx="27" cy="29" r="27" stroke="#333" fill="none" /><path d="M27 29h27" stroke="#111" /><circle cx="54" cy="29" r="4" fill="#b9b9b9" stroke="#444" /></svg>
              <span className="ml-[-3px] leading-none">0</span>
              <div className="ml-[22px] leading-[14.500px] whitespace-nowrap">说明<C />在左侧小圆<br />点上按住 Shift 键<br />拖动鼠标可以生成<br />15度倍数角。</div>
            </div>
            <div className="h-[14px] mt-[10px] flex items-center leading-none"><Lab t="宽高比例" /><div className="ml-[4px]"><Cb /></div><span className="ml-[3px]">保持宽高相等</span></div>
          </div>
        </div>
      </div>

      <div className="h-[29px] shrink-0 flex items-center pl-[7px] pb-[1px] relative leading-none whitespace-nowrap bg-[linear-gradient(#d3d8dc,#f8f9fa)] border-t border-[#b4b8bb]">
        <span className="w-[183px] flex items-center">当前卡片类型<C />条码标签类卡片<svg width="5" height="3" viewBox="0 0 5 3" className="block ml-[5px]"><path d="M0 0h5L2.500 3Z" fill="#111" /></svg></span>
        <div className="w-[1px] h-[22px] bg-[#b4b8bb]" />
        <span className="ml-[16px] w-[89px]">未设置数据源</span>
        <div className="w-[1px] h-[22px] bg-[#b4b8bb]" />
        <span className="ml-[7px] w-[68px]">缩放<C />62%</span>
        <div className="w-[1px] h-[22px] bg-[#b4b8bb]" />
        <span className="ml-[8px] w-[85px]">画布DPI<C />300</span>
        <div className="w-[1px] h-[22px] bg-[#b4b8bb]" />
        <span className="ml-[7px] w-[186px] tracking-[0.3px]">卡片尺寸<C />60.0 毫米 x 40.0 毫米</span>
        <div className="w-[1px] h-[22px] bg-[#b4b8bb]" />
        <span className="ml-[7px] tracking-[0.2px]">鼠标位置<C />73.4 毫米，12.1 毫米</span>
        <svg width="11" height="11" viewBox="0 0 11 11" className="absolute right-[2px] bottom-[2px] block" fill="#a8a8a8"><path d="M8 0h2v2H8zM4 4h2v2H4zM8 4h2v2H8zM0 8h2v2H0zM4 8h2v2H4zM8 8h2v2H8z" /></svg>
      </div>

      <div className="absolute left-[755px] top-[290px] w-[231px] h-[31px] border-2 border-[#e8161f]" />
      <svg width="60" height="70" viewBox="0 0 60 70" className="absolute left-[945px] top-[362px] block">
        <path d="M6 5L23 11 18.500 15 54 65 52 66 15 19 9 25Z" fill="#ec1c24" />
      </svg>
    </div>
  );
}
